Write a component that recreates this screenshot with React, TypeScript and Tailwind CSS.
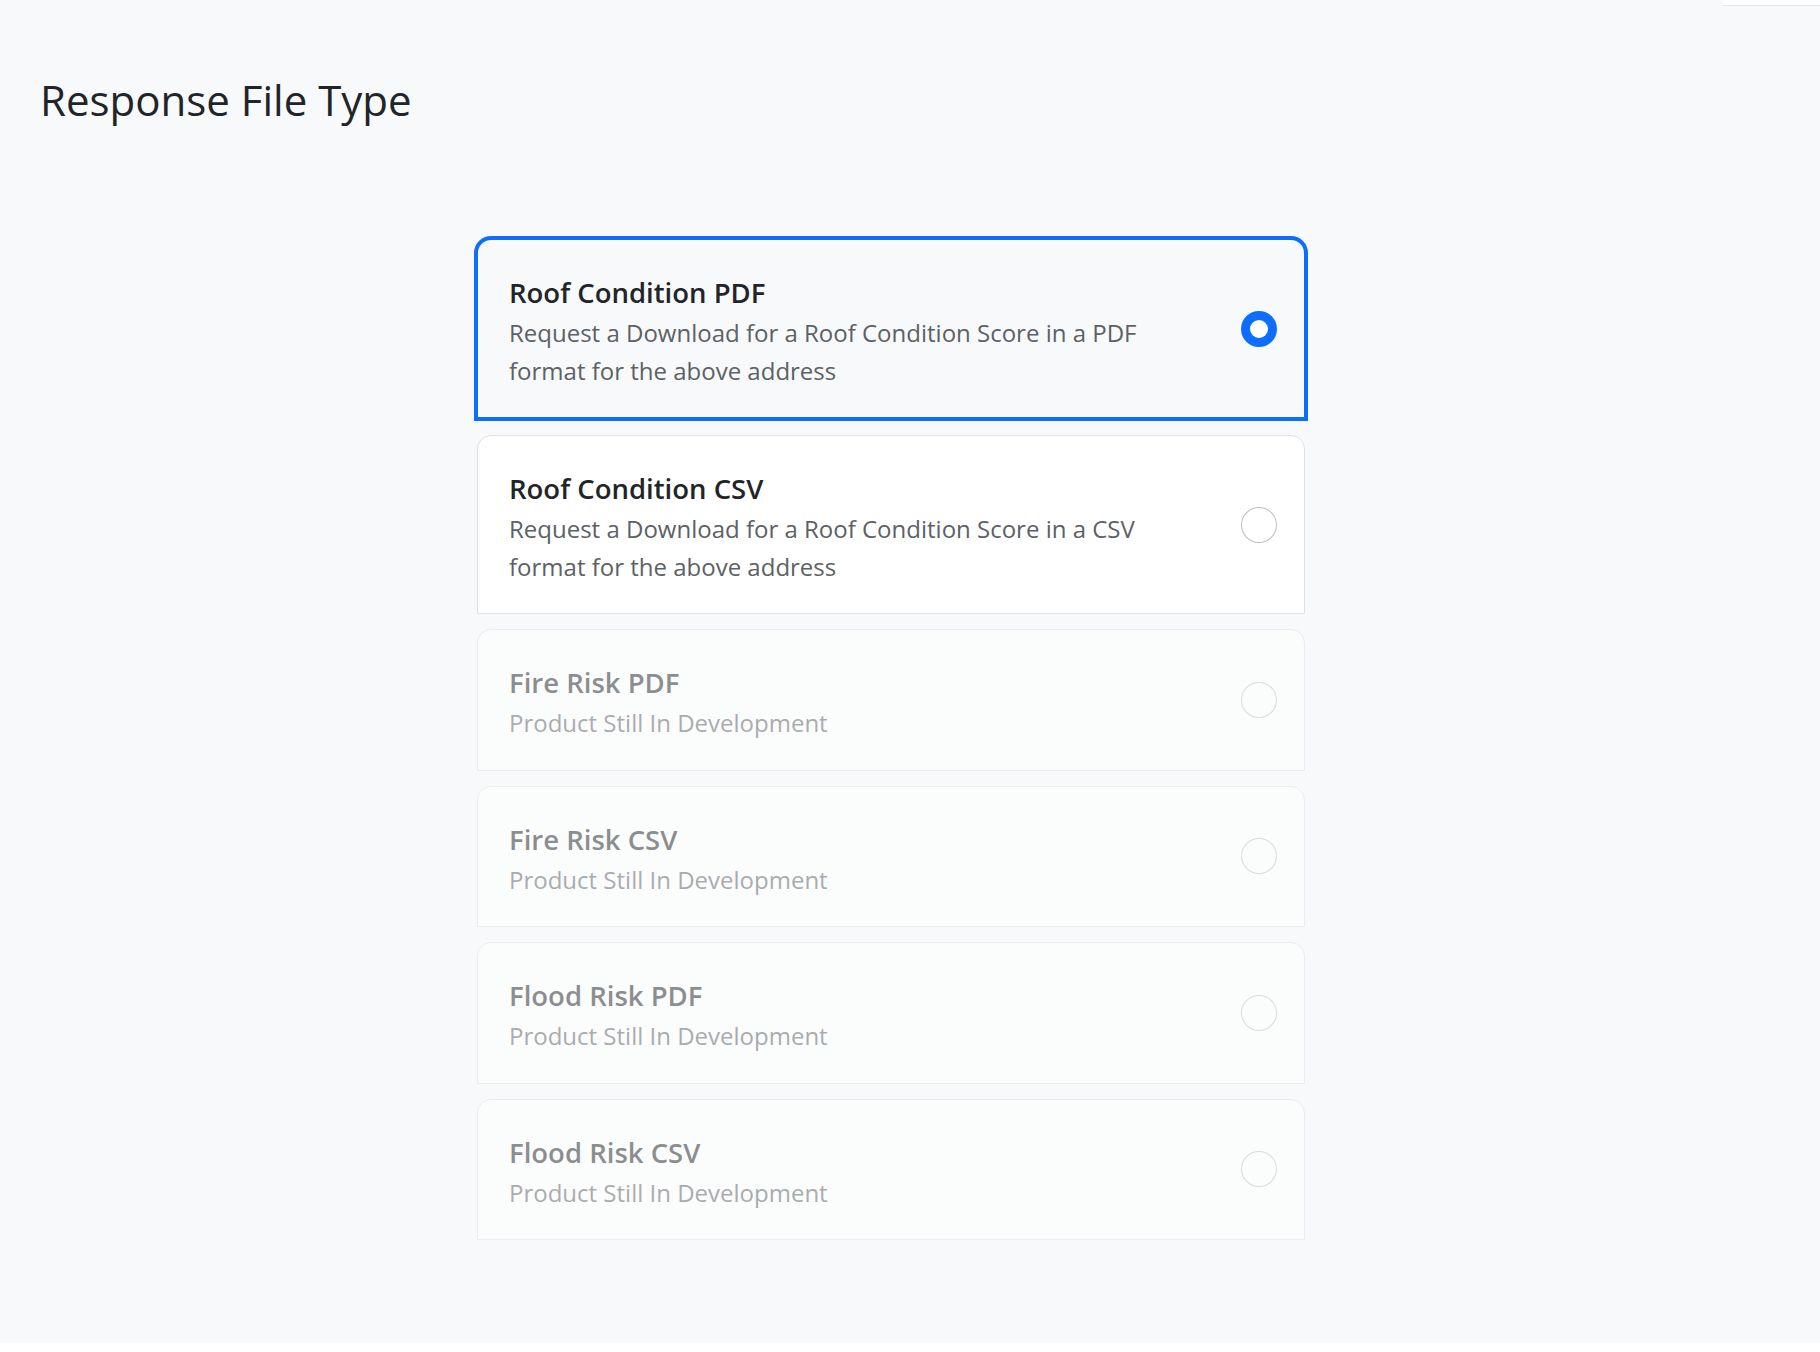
import { useState } from "react";

type Option = {
  id: string;
  title: string;
  description: string;
  disabled?: boolean;
};

const options: Option[] = [
  {
    id: "roof-pdf",
    title: "Roof Condition PDF",
    description: "Request a Download for a Roof Condition Score in a PDF format for the above address",
  },
  {
    id: "roof-csv",
    title: "Roof Condition CSV",
    description: "Request a Download for a Roof Condition Score in a CSV format for the above address",
  },
  { id: "fire-pdf", title: "Fire Risk PDF", description: "Product Still In Development", disabled: true },
  { id: "fire-csv", title: "Fire Risk CSV", description: "Product Still In Development", disabled: true },
  { id: "flood-pdf", title: "Flood Risk PDF", description: "Product Still In Development", disabled: true },
  { id: "flood-csv", title: "Flood Risk CSV", description: "Product Still In Development", disabled: true },
];

function Radio({ checked }: { checked: boolean }) {
  if (checked) {
    return (
      <span className="flex h-[36px] w-[36px] shrink-0 items-center justify-center rounded-full bg-[#0d6efd]">
        <span className="h-[18px] w-[18px] rounded-full bg-white" />
      </span>
    );
  }
  return <span className="h-[36px] w-[36px] shrink-0 rounded-full border-[1.5px] border-black/25 bg-white" />;
}

function OptionCard({
  option,
  selected,
  onSelect,
}: {
  option: Option;
  selected: boolean;
  onSelect: () => void;
}) {
  const base = "flex items-center justify-between pr-[27px] pl-[31px] py-[28px]";
  const state = selected
    ? "-mx-[3px] -mt-[3px] -mb-[1px] rounded-t-[17px] border-4 border-[#0d6efd] bg-[#f8f9fa]"
    : option.disabled
      ? "rounded-t-[14px] border border-[#dee2e6] bg-white opacity-50"
      : "rounded-t-[14px] border border-[#dee2e6] bg-white cursor-pointer";

  return (
    <div className={`${base} ${state}`} onClick={() => !option.disabled && onSelect()}>
      <div className="w-[660px] pt-[8px]">
        <div className="text-[27.5px] leading-[34px] font-semibold text-[#212529]">{option.title}</div>
        <div className="mt-[4px] text-[24px] leading-[37.5px] text-[#5c6166]">{option.description}</div>
      </div>
      <Radio checked={selected} />
    </div>
  );
}

export default function App() {
  const [selected, setSelected] = useState("roof-pdf");

  return (
    <div className="min-h-screen bg-white" style={{ fontFamily: '"Open Sans", "Noto Sans", sans-serif' }}>
      <div className="relative h-[1343px] bg-[#f8f9fa]">
        <div className="absolute top-0 right-0 h-[6px] w-[97px] border-b border-[#e3e6ea] bg-white" />
        <h1 className="pt-[80px] pl-[40px] text-[42px] leading-[40px] font-medium text-[#212529]">
          Response File Type
        </h1>
        <div className="mt-[119px] ml-[477px] flex w-[828px] flex-col gap-[15px]">
          {options.map((o) => (
            <OptionCard key={o.id} option={o} selected={selected === o.id} onSelect={() => setSelected(o.id)} />
          ))}
        </div>
      </div>
    </div>
  );
}
